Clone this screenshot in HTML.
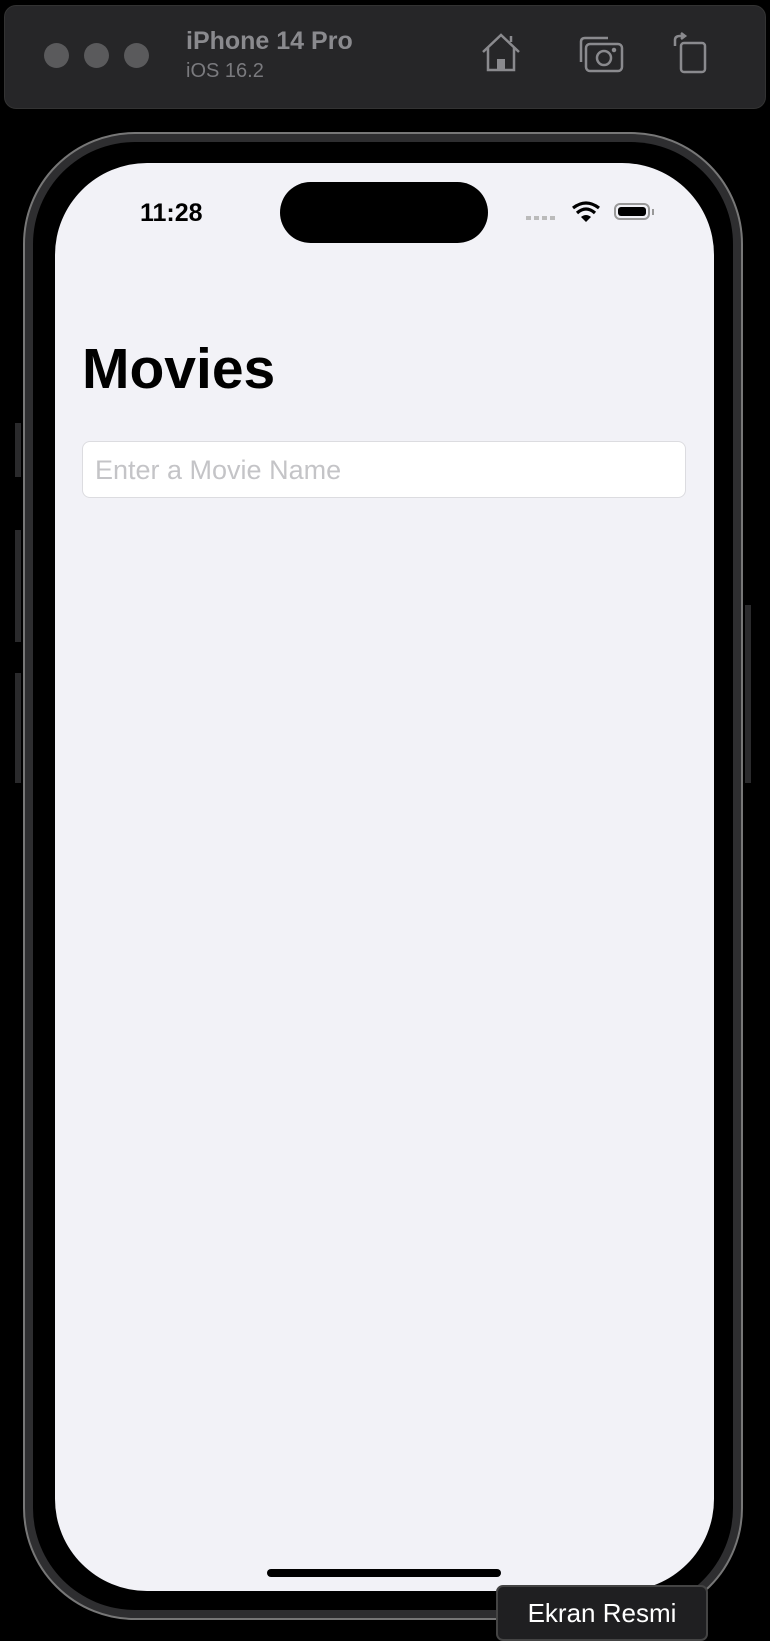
<!DOCTYPE html>
<html><head><meta charset="utf-8"><style>
html,body{margin:0;padding:0;background:#000;width:770px;height:1636px;overflow:hidden;font-family:"Liberation Sans",sans-serif}
.abs{position:absolute}
.bar{left:4px;top:5px;width:760px;height:102px;background:#262628;border-radius:12px;border:1px solid #333}
.dot{width:25px;height:25px;border-radius:50%;background:#5a5a5c;top:43px}
.phone{left:23px;top:132px;width:720px;height:1488px;border-radius:112px;border:2px solid #777;background:#2e2e30;box-sizing:border-box}
.inner{left:33px;top:142px;width:700px;height:1468px;border-radius:102px;background:#000}
.screen{left:55px;top:163px;width:659px;height:1428px;border-radius:92px;background:#f2f2f7;overflow:hidden}
.btn{background:#2a2a2c;width:6px}
</style></head><body>
<div class="abs bar"></div>
<div class="abs dot" style="left:44px"></div>
<div class="abs dot" style="left:84px"></div>
<div class="abs dot" style="left:124px"></div>
<div class="abs" style="left:186px;top:27px;color:#8a8a8e;font-weight:bold;font-size:25px">iPhone 14 Pro</div>
<div class="abs" style="left:186px;top:60px;color:#7a7a7e;font-size:20px">iOS 16.2</div>
<svg class="abs" style="left:478px;top:30px" width="46" height="46" viewBox="0 0 46 46" fill="none" stroke="#8a8a8e" stroke-width="2.5"><path d="M5 22 L23 5 L41 22 M10 18 V40 H36 V18"/><rect x="19" y="29" width="8" height="11" fill="#8a8a8e" stroke="none"/><path d="M33 12 V6"/></svg>
<svg class="abs" style="left:578px;top:34px" width="48" height="40" viewBox="0 0 48 40" fill="none" stroke="#8a8a8e" stroke-width="2.5"><path d="M3 28 V8 Q3 4 7 4 H30"/><rect x="8" y="10" width="36" height="27" rx="4"/><circle cx="26" cy="24" r="7"/><circle cx="36" cy="16" r="1" fill="#8a8a8e"/></svg>
<svg class="abs" style="left:672px;top:32px" width="36" height="42" viewBox="0 0 36 42" fill="none" stroke="#8a8a8e" stroke-width="2.5"><rect x="9" y="11" width="24" height="29" rx="3"/><path d="M3 14 V8 Q3 4 8 4 H12 M9 1 L13 4 L9 7"/></svg>
<div class="abs btn" style="left:15px;top:423px;height:54px"></div>
<div class="abs btn" style="left:15px;top:530px;height:112px"></div>
<div class="abs btn" style="left:15px;top:673px;height:110px"></div>
<div class="abs btn" style="left:745px;top:605px;height:178px"></div>
<div class="abs phone"></div>
<div class="abs inner"></div>
<div class="abs screen">
 <div class="abs" style="left:85px;top:36px;font-weight:bold;font-size:25px;color:#000">11:28</div>
 <div class="abs" style="left:225px;top:19px;width:208px;height:61px;border-radius:31px;background:#000"></div>
 <div class="abs" style="left:471px;top:53px;width:32px;height:4px;background:repeating-linear-gradient(90deg,#bbb 0 5px,transparent 5px 8px)"></div>
 <svg class="abs" style="left:517px;top:38px" width="28" height="22" viewBox="0 0 28 22"><path d="M14 21 L9 16 Q14 12 19 16 Z" fill="#000"/><path d="M5 12 Q14 4 23 12" stroke="#000" stroke-width="3.2" fill="none"/><path d="M1 7 Q14 -3 27 7" stroke="#000" stroke-width="3.2" fill="none"/></svg>
 <div class="abs" style="left:559px;top:40px;width:36px;height:17px;border:2px solid #999;border-radius:6px;box-sizing:border-box;padding:2px"><div style="background:#000;width:100%;height:100%;border-radius:3px"></div></div>
 <div class="abs" style="left:597px;top:46px;width:2px;height:6px;background:#999"></div>
 <div class="abs" style="left:27px;top:174px;font-weight:bold;font-size:57px;color:#000;line-height:64px">Movies</div>
 <div class="abs" style="left:27px;top:278px;width:604px;height:57px;background:#fff;border:1px solid #dcdce0;border-radius:8px;box-sizing:border-box"></div>
 <div class="abs" style="left:40px;top:292px;font-size:27px;color:#c4c4c7;line-height:30px">Enter a Movie Name</div>
 <div class="abs" style="left:212px;top:1406px;width:234px;height:8px;border-radius:4px;background:#000"></div>
</div>
<div class="abs" style="left:496px;top:1585px;width:212px;height:56px;background:#1f1f21;border:2px solid #444;border-radius:7px;box-sizing:border-box;color:#fff;font-size:26px;text-align:center;line-height:52px">Ekran Resmi</div>
</body></html>
